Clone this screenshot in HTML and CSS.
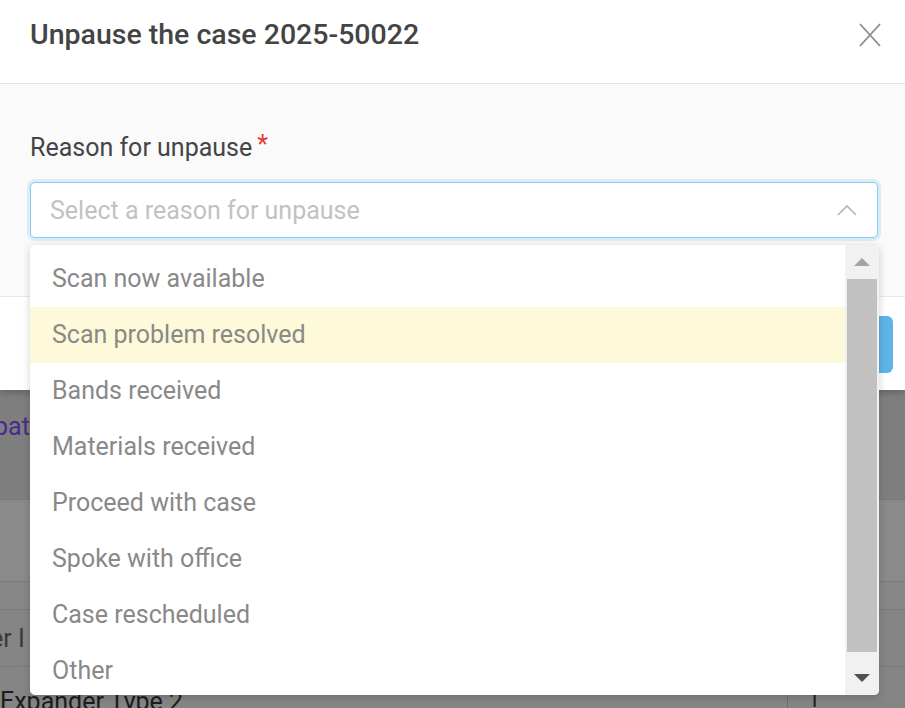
FILE: index.html
```html
<!DOCTYPE html>
<html>
<head>
<meta charset="utf-8">
<link rel="stylesheet" href="styles.css">
</head>
<body>
<div class="modal">
  <div class="modal-header">
    <h1 class="title">Unpause the case 2025-50022</h1>
    <svg class="close" width="22" height="24" viewBox="0 0 22 24"><path d="M1 1 L21 23 M21 1 L1 23" stroke="#8a8a8a" stroke-width="1.8" fill="none"/></svg>
  </div>
  <div class="modal-body">
    <div class="label">Reason for unpause<span class="req">*</span></div>
    <div class="select">
      <span class="placeholder">Select a reason for unpause</span>
      <svg class="chev" width="20" height="12" viewBox="0 0 20 12"><path d="M1 11 L10 2 L19 11" stroke="#b5b5b5" stroke-width="1.6" fill="none"/></svg>
    </div>
  </div>
  <div class="modal-footer">
    <div class="btn"></div>
  </div>
</div>
<div class="backdrop">
  <div class="row row-a"><span class="link">pat</span></div>
  <div class="row row-b"></div>
  <div class="row row-c"></div>
  <div class="row row-d"><span class="cell">er I</span></div>
  <div class="row row-e"><span class="cell dark">Expander Type 2</span><span class="num">1</span></div>
</div>
<div class="dropdown">
  <ul class="options">
    <li>Scan now available</li>
    <li class="hl">Scan problem resolved</li>
    <li>Bands received</li>
    <li>Materials received</li>
    <li>Proceed with case</li>
    <li>Spoke with office</li>
    <li>Case rescheduled</li>
    <li>Other</li>
  </ul>
  <div class="scrollbar">
    <div class="arrow up"></div>
    <div class="thumb"></div>
    <div class="arrow down"></div>
  </div>
</div>
</body>
</html>
```
FILE: styles.css
```css
html, body { margin: 0; padding: 0; }
body {
  width: 905px;
  height: 708px;
  overflow: hidden;
  background: #858585;
  font-family: Roboto, "Noto Sans", Arial, sans-serif;
  position: relative;
}
.modal {
  width: 905px;
  background: #fff;
  box-shadow: 0 2px 8px rgba(0,0,0,0.25);
  position: relative;
  z-index: 2;
}
.modal-header {
  display: flex;
  align-items: center;
  justify-content: space-between;
  padding: 0 24px 0 30px;
  box-sizing: border-box;
  height: 84px;
  border-bottom: 1px solid #e6e6e6;
}
.title {
  margin: 0;
  font-size: 28.5px;
  font-weight: 500;
  color: #444;
  margin-top: -14px;
}
.close { margin-top: -13px; }
.modal-body {
  background: #fafafa;
  padding: 50px 27px 57px 30px;
  height: 212px;
  box-sizing: border-box;
}
.label {
  font-size: 25px;
  color: #444;
  line-height: 28px;
  height: 28px;
}
.req {
  color: #e53935;
  margin-left: 5px;
  position: relative;
  top: -3px;
}
.select {
  margin-top: 20px;
  height: 56px;
  box-sizing: border-box;
  border: 1px solid #7fcff3;
  border-radius: 5px;
  background: #fff;
  box-shadow: 0 0 0 3px #dcecf6;
  display: flex;
  align-items: center;
  justify-content: space-between;
  padding: 0 20px 0 19px;
}
.placeholder {
  font-size: 25px;
  color: #c2c2c2;
}
.modal-footer {
  height: 94px;
  border-top: 1px solid #e8e8e8;
  box-sizing: border-box;
  display: flex;
  justify-content: flex-end;
  align-items: flex-start;
  padding: 19px 12px 0 0;
}
.btn {
  width: 45px;
  height: 57px;
  background: #5db5e6;
  border-radius: 6px;
}
.backdrop {
  position: relative;
  z-index: 1;
}
.row {
  border-bottom: 1px solid #7a7a7a;
  box-sizing: border-box;
  display: flex;
  align-items: center;
}
.row-a { height: 110px; background: #7f7f7f; align-items: flex-start; padding-top: 22px; }
.row-b { height: 82px; background: #8a8a8a; }
.row-c { height: 28px; background: #878787; }
.row-d { height: 57px; background: #858585; }
.row-e { height: 60px; background: #858585; align-items: flex-start; padding-top: 20px; }
.link {
  font-size: 25px;
  color: #4a2a8c;
  margin-left: -6px;
}
.cell {
  font-size: 25px;
  color: #3a3a3a;
  margin-left: -10px;
}
.cell.dark { color: #1c1c1c; margin-left: 0; }
.num {
  margin-left: auto;
  margin-right: 85px;
  font-size: 22px;
  color: #1c1c1c;
  border-left: 1px solid #6e6e6e;
  padding-left: 20px;
}
.dropdown {
  position: absolute;
  left: 30px;
  top: 245px;
  width: 849px;
  height: 450px;
  background: #fff;
  border-radius: 5px;
  box-shadow: 0 2px 8px rgba(0,0,0,0.18);
  display: flex;
  overflow: hidden;
  z-index: 5;
}
.options {
  list-style: none;
  margin: 0;
  padding: 6px 0 0 0;
  flex: 1;
}
.options li {
  height: 56px;
  line-height: 56px;
  padding-left: 22px;
  font-size: 25px;
  color: #898989;
}
.options li.hl { background: #fef9d8; }
.scrollbar {
  width: 34px;
  background: #f1f1f1;
  display: flex;
  flex-direction: column;
  align-items: center;
}
.arrow {
  width: 0;
  height: 0;
  border-left: 8px solid transparent;
  border-right: 8px solid transparent;
}
.arrow.up {
  border-bottom: 8px solid #a3a3a3;
  margin: 13px 0 13px;
}
.arrow.down {
  border-top: 8px solid #505050;
  margin: 22px 0 0;
}
.thumb {
  width: 30px;
  height: 373px;
  background: #c1c1c1;
}
```
